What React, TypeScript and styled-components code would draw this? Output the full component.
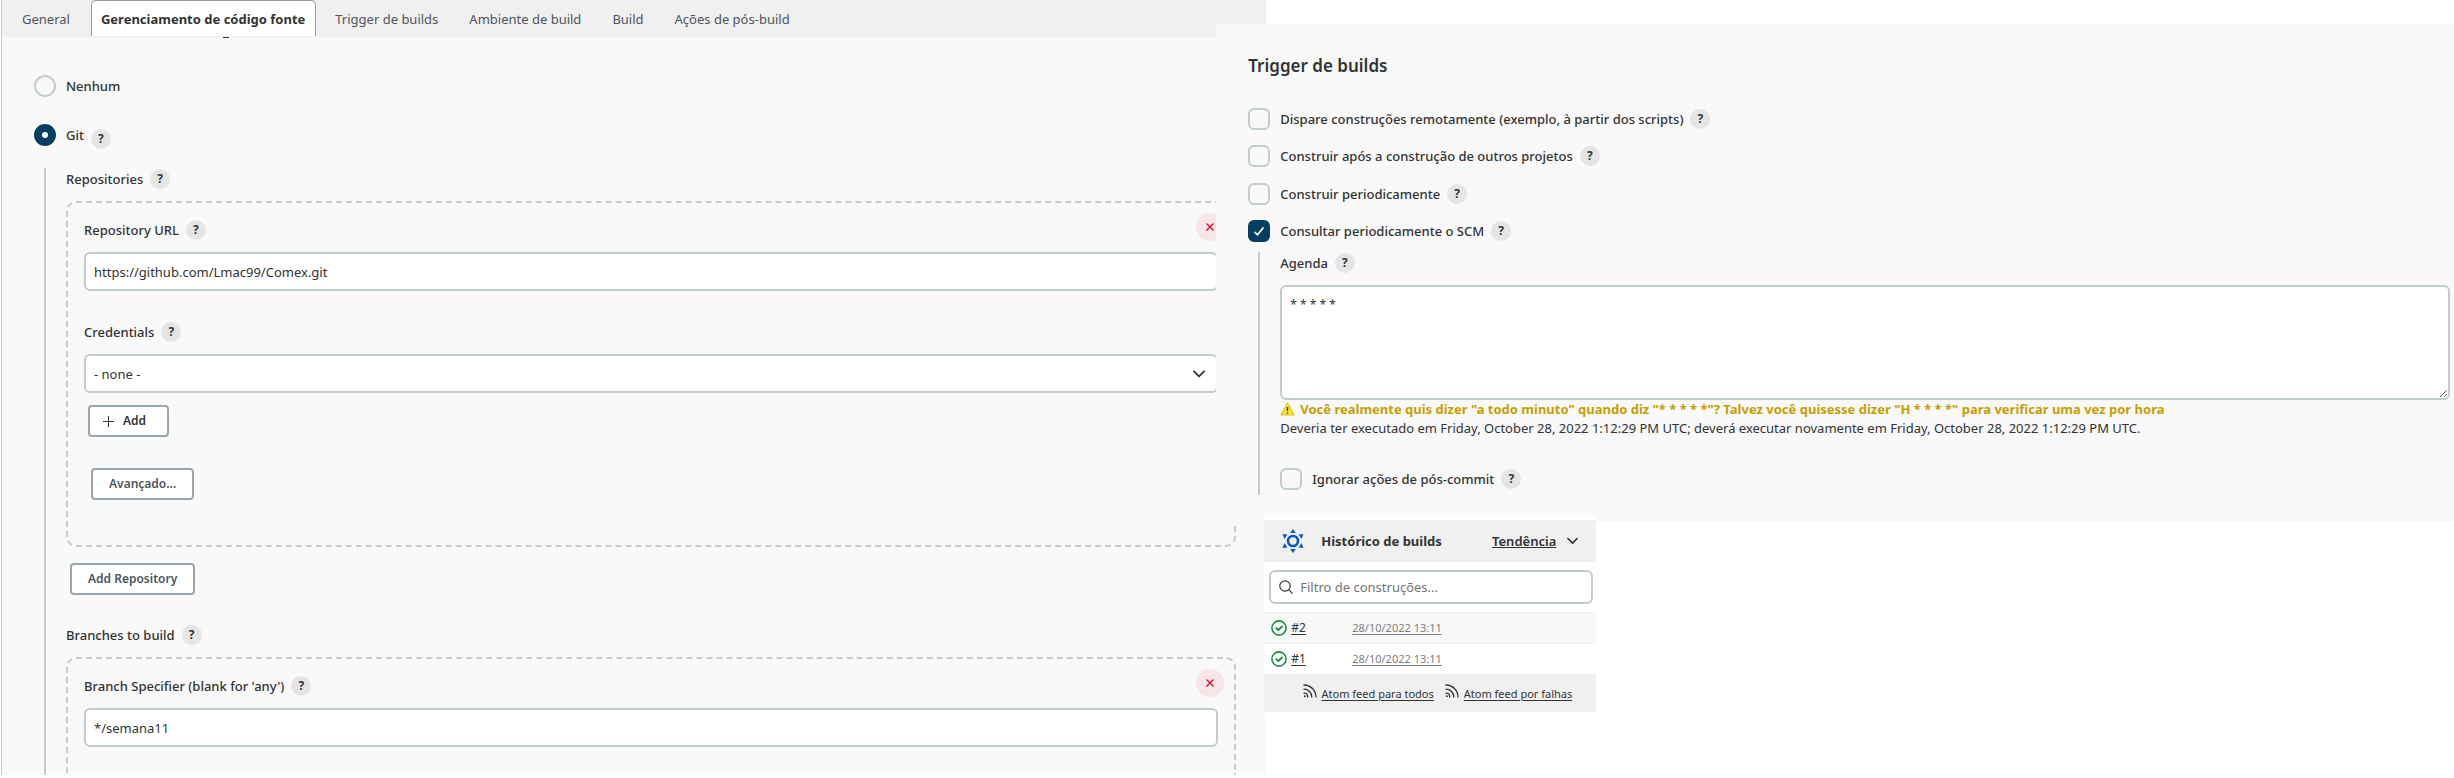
import React, { useId, useState } from 'react';
import styled, { createGlobalStyle } from 'styled-components';

const line = '#c1ccd0';
const panelBg = '#f9f9f9';
const barBg = '#f0f0f0';
const ink = '#333333';

const GlobalStyle = createGlobalStyle`
  * { box-sizing: border-box; }
  body {
    margin: 0;
    background: #ffffff;
    color: ${ink};
    font: 400 13px/20px "Noto Sans", "Open Sans", sans-serif;
  }
  button, input, select, textarea { font: inherit; color: inherit; }
`;

const Page = styled.div`
  display: flex;
  align-items: flex-start;
`;

const ScmPanel = styled.main`
  flex: 0 0 calc(51.6% - 1px);
  margin-left: 1px;
  border-left: 1px solid ${line};
  background: ${panelBg};
`;

const Tabs = styled.nav`
  display: flex;
  gap: 4px;
  height: 37px;
  padding-left: 7px;
  background: ${barBg};
`;

const Tab = styled.a<{ $active?: boolean }>`
  padding: ${(p) => (p.$active ? '8px 10px 0 9px' : '9px 14px 0 13px')};
  ${(p) => (p.$active ? 'margin: 0 2px 1px 3px;' : '')}
  border: ${(p) => (p.$active ? '1px solid #8d9ba6' : '0')};
  border-bottom: 0;
  border-radius: 5px 5px 0 0;
  background: ${(p) => (p.$active ? '#ffffff' : 'transparent')};
  color: ${(p) => (p.$active ? ink : '#4d545d')};
  font-weight: ${(p) => (p.$active ? 700 : 400)};
  text-decoration: none;
  white-space: nowrap;
`;

const Descender = styled.div`
  width: 6px;
  height: 1px;
  margin-left: 221px;
  background: ${ink};
`;

const ScmBody = styled.div`
  padding: 37px 30px 0 32px;
`;

const OptionRow = styled.div<{ $space: number }>`
  display: flex;
  align-items: center;
  height: 22px;
  margin-bottom: ${(p) => p.$space}px;
`;

const Label = styled.label`
  font-weight: 500;
  white-space: nowrap;
`;

const Radio = styled.input`
  appearance: none;
  width: 22px;
  height: 22px;
  margin: 0 10px 0 0;
  border: 2px solid ${line};
  border-radius: 50%;
  &:checked {
    border: 8px solid #063e62;
    background: #ffffff;
  }
`;

const CheckWrap = styled.span`
  display: grid;
  margin-right: 10px;
  > * { grid-area: 1 / 1; place-self: center; }
  svg { pointer-events: none; }
`;

const Checkbox = styled.input`
  appearance: none;
  width: 22px;
  height: 22px;
  margin: 0;
  border: 2px solid ${line};
  border-radius: 6px;
  &:checked {
    border-color: #063e62;
    background: #063e62;
  }
`;

const HelpButton = styled.button<{ $low?: boolean }>`
  flex: none;
  width: 20px;
  height: 20px;
  margin-left: 7px;
  ${(p) => (p.$low ? 'align-self: flex-end; margin-bottom: -3px;' : '')}
  padding: 0;
  border: 0;
  border-radius: 50%;
  background: #e5e5e5;
  font-size: 12px;
  line-height: 20px;
  font-weight: 700;
`;

const Nested = styled.section`
  margin-left: 10px;
  padding: 1px 0 0 20px;
  border-left: 2px solid ${line};
`;

const FieldHead = styled.div`
  display: flex;
  align-items: center;
  height: 20px;
  margin-bottom: 12px;
`;

const Chunk = styled.div<{ $open?: boolean }>`
  position: relative;
  padding: 17px 16px ${(p) => (p.$open ? 28 : 45)}px;
  border: 2px dashed ${line};
  border-radius: 10px;
  ${(p) => (p.$open ? 'border-bottom: 0; border-radius: 10px 10px 0 0;' : '')}
`;

const RemoveButton = styled.button`
  position: absolute;
  top: 10px;
  right: 10px;
  display: grid;
  place-items: center;
  width: 28px;
  height: 28px;
  padding: 0;
  border: 0;
  border-radius: 50%;
  background: #f8e5e7;
`;

const TextInput = styled.input`
  display: block;
  width: 100%;
  height: 39px;
  padding: 0 8px;
  border: 2px solid ${line};
  border-radius: 6px;
  background: #ffffff;
`;

const Gap = styled.div`
  height: 31px;
`;

const SelectWrap = styled.div`
  display: grid;
  margin-bottom: 12px;
  > * { grid-area: 1 / 1; }
  svg {
    place-self: center end;
    margin-right: 13px;
    pointer-events: none;
  }
`;

const Select = styled.select`
  appearance: none;
  width: 100%;
  height: 39px;
  padding: 0 8px;
  border: 2px solid ${line};
  border-radius: 6px;
  background: #ffffff;
`;

const Button = styled.button<{ $indent: number; $dark?: boolean }>`
  display: flex;
  align-items: center;
  gap: 9px;
  height: 32px;
  margin-left: ${(p) => p.$indent}px;
  padding: 0 ${(p) => (p.$dark ? '21px 0 13px' : '16px')};
  border: 2px solid #98a6af;
  border-radius: 4px;
  background: #ffffff;
  color: ${(p) => (p.$dark ? ink : '#4d545d')};
  font-size: 12px;
  font-weight: 600;
`;

const AddRow = styled.div`
  padding: 16px 0 30px;
`;

const SideColumn = styled.div`
  position: relative;
  flex: 1;
  min-width: 0;
  margin-left: -50px;
  padding-top: 24px;
`;

const TriggerPanel = styled.section`
  padding: 30px 4px 27px 32px;
  background: ${panelBg};
`;

const Title = styled.h2`
  margin: 0 0 30px;
  font-size: 17px;
  line-height: 24px;
  font-weight: 600;
`;

const TriggerNested = styled.div`
  margin: -5px 0 0 10px;
  padding: 1px 0 5px 20px;
  border-left: 2px solid ${line};
`;

const Schedule = styled.textarea`
  display: block;
  width: 100%;
  height: 115px;
  padding: 8px;
  border: 2px solid ${line};
  border-radius: 6px;
  background: #ffffff;
  font-size: 12px;
  resize: vertical;
`;

const Warning = styled.p`
  display: flex;
  align-items: center;
  gap: 5px;
  height: 18px;
  margin: 0;
  color: #c4a000;
  font-weight: 700;
`;

const Note = styled.p`
  margin: 0 0 30px;
`;

const History = styled.aside`
  position: relative;
  width: 332px;
  margin: -6px 0 0 48px;
  padding: 4px 0;
  background: #ffffff;
`;

const HistoryHead = styled.header`
  display: flex;
  align-items: center;
  height: 42px;
  padding: 0 18px;
  background: ${barBg};
  font-weight: 700;
`;

const HistoryTitle = styled.h2`
  flex: 1;
  margin: 0 0 0 17px;
  font: inherit;
`;

const TrendLink = styled.a`
  margin-right: 11px;
  color: inherit;
  font-weight: 600;
`;

const SearchBox = styled.label`
  display: flex;
  align-items: center;
  gap: 7px;
  height: 34px;
  margin: 8px 3px 8px 5px;
  padding: 0 8px;
  border: 2px solid ${line};
  border-radius: 6px;
`;

const SearchInput = styled.input`
  flex: 1;
  min-width: 0;
  padding: 0;
  border: 0;
  outline: 0;
  background: transparent;
  &::placeholder { color: #757575; opacity: 1; }
`;

const Builds = styled.table`
  width: 100%;
  border-spacing: 0;
  font-size: 12px;
`;

const BuildRow = styled.tr`
  height: 31px;
  &:nth-child(odd) { background: #f8f8f8; }
`;

const BuildCell = styled.td<{ $wide?: boolean }>`
  width: ${(p) => (p.$wide ? 'auto' : '88px')};
  padding: 0 0 0 ${(p) => (p.$wide ? 0 : 7)}px;
  border-top: 1px solid #efefef;
`;

const BuildName = styled.div`
  display: flex;
  align-items: center;
  gap: 4px;
`;

const BuildLink = styled.a<{ $muted?: boolean }>`
  color: ${(p) => (p.$muted ? '#808080' : ink)};
  font-size: ${(p) => (p.$muted ? 11 : 12)}px;
  text-underline-offset: 2px;
`;

const Feeds = styled.footer`
  display: flex;
  justify-content: flex-end;
  gap: 11px;
  height: 38px;
  padding: 10px 24px 0 0;
  background: ${barBg};
`;

const FeedLink = styled.a`
  display: flex;
  gap: 5px;
  color: ${ink};
  font-size: 11px;
  text-underline-offset: 2px;
`;

const Help = ({ about, low }: { about: string; low?: boolean }) => (
  <HelpButton type="button" $low={low} aria-label={`Ajuda: ${about}`}>?</HelpButton>
);

const Field = ({ text, id }: { text: string; id?: string }) => (
  <FieldHead>
    <Label as={id ? 'label' : 'span'} htmlFor={id}>{text}</Label>
    <Help about={text} />
  </FieldHead>
);

const Remove = () => (
  <RemoveButton type="button" aria-label="Remover">
    <svg width="8" height="8" viewBox="0 0 8 8" stroke="#e0002b" strokeWidth="1.3" fill="none">
      <path d="M.5.5l7 7M7.5.5l-7 7" />
    </svg>
  </RemoveButton>
);

const Chevron = ({ width = 12 }: { width?: number }) => (
  <svg width={width} height="8" viewBox="0 0 12 8" fill="none" stroke={ink} strokeWidth="1.8" strokeLinecap="round" strokeLinejoin="round">
    <path d="M1 1.3l5 5 5-5" />
  </svg>
);

const Check = ({ text, checked, space }: { text: string; checked?: boolean; space: number }) => {
  const id = useId();
  const [on, setOn] = useState(!!checked);
  return (
    <OptionRow $space={space}>
      <CheckWrap>
        <Checkbox id={id} type="checkbox" checked={on} onChange={() => setOn(!on)} />
        {on && (
          <svg width="10" height="9" viewBox="0 0 10 9" fill="none" stroke="#fff" strokeWidth="1.7" strokeLinecap="round" strokeLinejoin="round">
            <path d="M1 5.3l2.5 2.5L9 1" />
          </svg>
        )}
      </CheckWrap>
      <Label htmlFor={id}>{text}</Label>
      <Help about={text} />
    </OptionRow>
  );
};

const SunIcon = () => (
  <svg width="22" height="24" viewBox="0 0 22 24" fill="#0b57c6">
    <circle cx="11" cy="12" r="5" fill="none" stroke="#0b57c6" strokeWidth="2.6" />
    <path d="M11 0l2.8 4H8.2zM11 24l2.8-4H8.2zM.6 5l4.8.6-3 4.400zM21.4 5l-4.800.6 3 4.400zM.6 19l4.800-.6-3-4.400zM21.400 19l-4.800-.6 3-4.400z" />
  </svg>
);

const SuccessIcon = () => (
  <svg width="16" height="16" viewBox="0 0 16 16" fill="none" stroke="#1a9147" strokeLinecap="round" strokeLinejoin="round">
    <circle cx="8" cy="8" r="7.1" strokeWidth="1.6" />
    <path d="M5.3 8.2l2 2 3.6-3.7" strokeWidth="1.9" />
  </svg>
);

const SearchIcon = () => (
  <svg width="14" height="14" viewBox="0 0 14 14" fill="none" stroke={ink} strokeWidth="1.2" strokeLinecap="round">
    <circle cx="6" cy="6" r="5.2" />
    <path d="M9.8 9.8l3.4 3.4" />
  </svg>
);

const FeedIcon = () => (
  <svg width="14" height="14" viewBox="0 0 14 14" fill="none" stroke={ink} strokeWidth="1.3" strokeLinecap="round">
    <path d="M1 1c6.600 0 12 5.400 12 12M1 5.200c4.300 0 7.800 3.500 7.800 7.800" />
    <path d="M1 9.200c2 .1 3.700 1.700 3.800 3.800" />
    <circle cx="1.8" cy="12.2" r="1" fill={ink} stroke="none" />
  </svg>
);

const WarningIcon = () => (
  <svg width="15" height="14" viewBox="0 0 15 14">
    <path d="M7.500 1L14 13H1z" fill="#fbe436" stroke="#d9c21c" strokeWidth="1.2" strokeLinejoin="round" />
    <path d="M7.500 5v4" stroke="#333" strokeWidth="1.4" />
    <circle cx="7.5" cy="11" r=".8" fill="#333" />
  </svg>
);

const tabs = ['General', 'Gerenciamento de código fonte', 'Trigger de builds', 'Ambiente de build', 'Build', 'Ações de pós-build'];

export default function App() {
  const [scm, setScm] = useState('git');
  return (
    <Page>
      <GlobalStyle />
      <ScmPanel>
        <Tabs>
          {tabs.map((t, i) => (
            <Tab key={t} href="#" $active={i === 1}>{t}</Tab>
          ))}
        </Tabs>
        <Descender />
        <ScmBody>
          <OptionRow $space={27}>
            <Radio type="radio" name="scm" id="none" checked={scm === 'none'} onChange={() => setScm('none')} />
            <Label htmlFor="none">Nenhum</Label>
          </OptionRow>
          <OptionRow $space={22}>
            <Radio type="radio" name="scm" id="git" checked={scm === 'git'} onChange={() => setScm('git')} />
            <Label htmlFor="git">Git</Label>
            <Help about="Git" low />
          </OptionRow>
          <Nested>
            <Field text="Repositories" />
            <Chunk>
              <Remove />
              <Field text="Repository URL" id="url" />
              <TextInput id="url" defaultValue="https://github.com/Lmac99/Comex.git" />
              <Gap />
              <Field text="Credentials" id="cred" />
              <SelectWrap>
                <Select id="cred"><option>- none -</option></Select>
                <Chevron />
              </SelectWrap>
              <Button type="button" $indent={4} $dark>
                <svg width="11" height="11" viewBox="0 0 11 11" stroke={ink}><path d="M5.500 0v11M0 5.500h11" /></svg>
                Add
              </Button>
              <Gap />
              <Button type="button" $indent={7}>Avançado...</Button>
            </Chunk>
            <AddRow>
              <Button type="button" $indent={4}>Add Repository</Button>
            </AddRow>
            <Field text="Branches to build" />
            <Chunk $open>
              <Remove />
              <Field text="Branch Specifier (blank for 'any')" id="branch" />
              <TextInput id="branch" defaultValue="*/semana11" />
            </Chunk>
          </Nested>
        </ScmBody>
      </ScmPanel>

      <SideColumn>
        <TriggerPanel>
          <Title>Trigger de builds</Title>
          <Check text="Dispare construções remotamente (exemplo, à partir dos scripts)" space={15} />
          <Check text="Construir após a construção de outros projetos" space={16} />
          <Check text="Construir periodicamente" space={15} />
          <Check text="Consultar periodicamente o SCM" checked space={15} />
          <TriggerNested>
            <Field text="Agenda" id="agenda" />
            <Schedule id="agenda" defaultValue="* * * * *" />
            <Warning>
              <WarningIcon />
              Você realmente quis dizer "a todo minuto" quando diz "* * * * *"? Talvez você quisesse dizer "H * * * *" para verificar uma vez por hora
            </Warning>
            <Note>
              Deveria ter executado em Friday, October 28, 2022 1:12:29 PM UTC; deverá executar novamente em Friday, October 28, 2022 1:12:29 PM UTC.
            </Note>
            <Check text="Ignorar ações de pós-commit" space={0} />
          </TriggerNested>
        </TriggerPanel>

        <History>
          <HistoryHead>
            <SunIcon />
            <HistoryTitle>Histórico de builds</HistoryTitle>
            <TrendLink href="#">Tendência</TrendLink>
            <Chevron width={11} />
          </HistoryHead>
          <SearchBox>
            <SearchIcon />
            <SearchInput aria-label="Filtro de construções" placeholder="Filtro de construções..." />
          </SearchBox>
          <Builds>
            <tbody>
              {['#2', '#1'].map((n) => (
                <BuildRow key={n}>
                  <BuildCell>
                    <BuildName>
                      <SuccessIcon />
                      <BuildLink href="#">{n}</BuildLink>
                    </BuildName>
                  </BuildCell>
                  <BuildCell $wide><BuildLink href="#" $muted>28/10/2022 13:11</BuildLink></BuildCell>
                </BuildRow>
              ))}
            </tbody>
          </Builds>
          <Feeds>
            <FeedLink href="#"><FeedIcon />Atom feed para todos</FeedLink>
            <FeedLink href="#"><FeedIcon />Atom feed por falhas</FeedLink>
          </Feeds>
        </History>
      </SideColumn>
    </Page>
  );
}
